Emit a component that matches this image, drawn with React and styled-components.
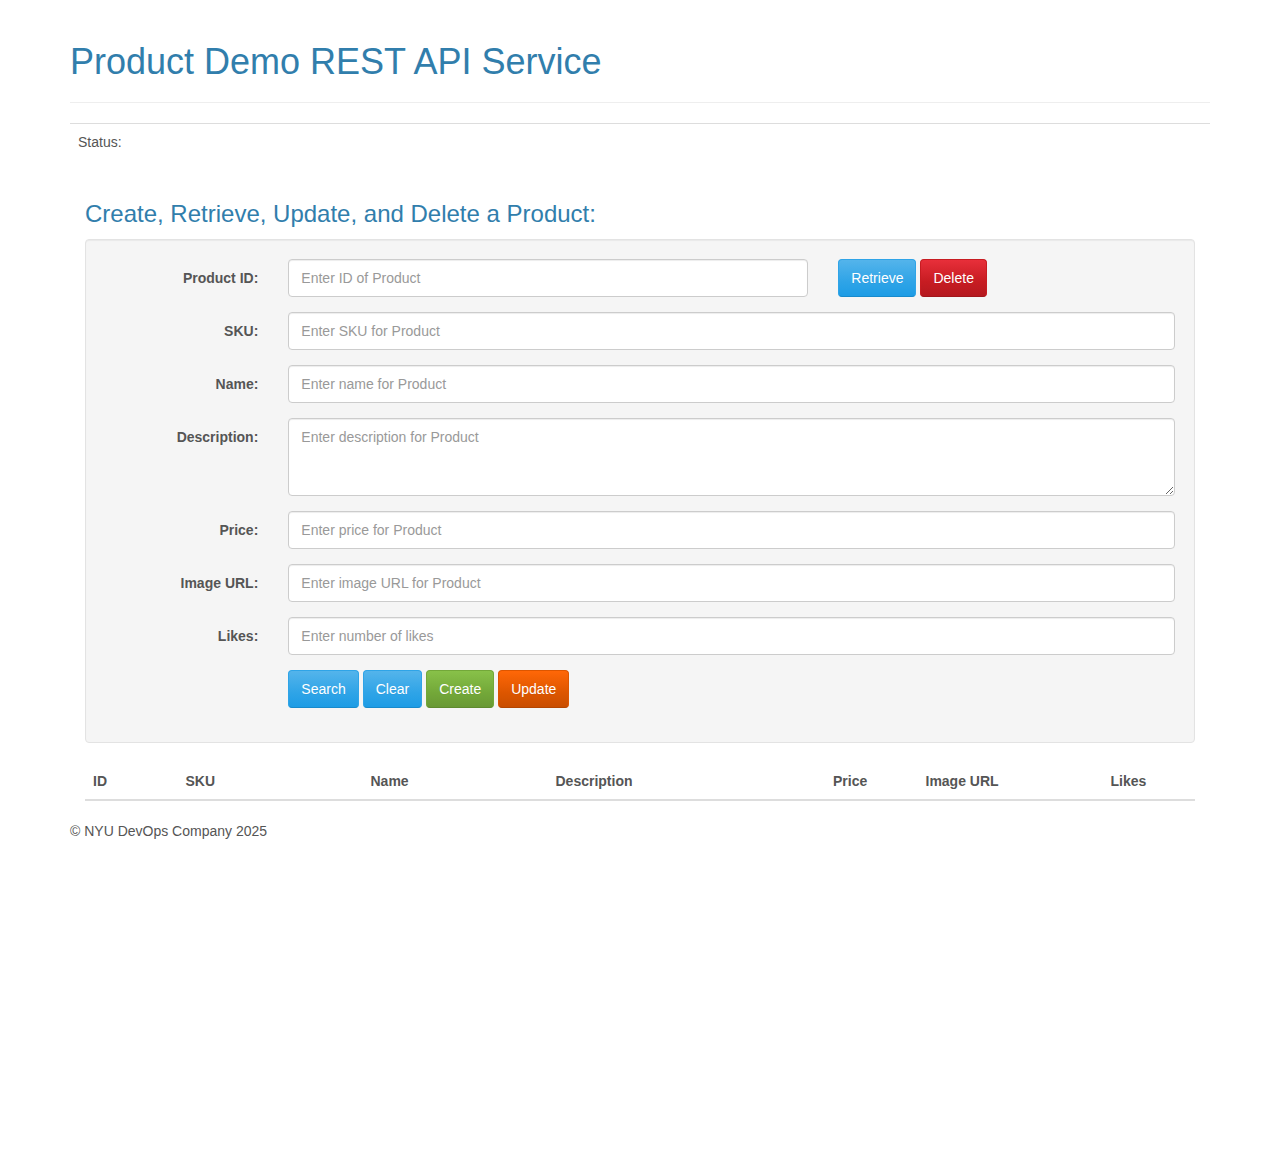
import React from "react";
import styled, { createGlobalStyle, css } from "styled-components";

const GlobalStyle = createGlobalStyle`
  * { box-sizing: border-box; }
  html, body { margin: 0; padding: 0; background: #fff; }
  body {
    font-family: "Liberation Sans", Arial, Helvetica, sans-serif;
    font-size: 14px;
    line-height: 20px;
    color: #555555;
  }
`;

const Container = styled.div`
  width: 1140px;
  margin: 0 auto;
`;

const PageHeader = styled.div`
  margin: 42px 0 20px;
  padding-bottom: 10px;
  border-bottom: 1px solid #eeeeee;
`;

const Title = styled.h1`
  margin: 0 0 10px;
  font-size: 36px;
  line-height: 39.6px;
  font-weight: 400;
  color: #317eac;
`;

const StatusRow = styled.div`
  display: flex;
  border-top: 1px solid #dddddd;
  padding: 8px;
  margin-bottom: 20px;
  line-height: 20px;
`;

const Section = styled.div`
  display: flow-root;
  padding: 0 15px;
`;

const SectionTitle = styled.h3`
  margin: 21px 0 12px;
  font-size: 24px;
  line-height: 26.4px;
  font-weight: 400;
  color: #317eac;
`;

const Well = styled.div`
  background: #f5f5f5;
  border: 1px solid #e3e3e3;
  border-radius: 4px;
  box-shadow: inset 0 1px 1px rgba(0, 0, 0, 0.05);
  padding: 19px;
  margin-bottom: 20px;
`;

const FormRow = styled.div`
  display: flex;
  margin: 0 -15px 15px;
`;

const Label = styled.label`
  width: 16.6667%;
  padding: 9px 15px 0;
  text-align: right;
  font-weight: 700;
  line-height: 20px;
`;

const Field = styled.div`
  width: ${(p) => p.$span}%;
  padding: 0 15px;
  margin-left: ${(p) => (p.$offset ? "16.6667%" : "0")};
`;

const controlStyles = css`
  display: block;
  width: 100%;
  padding: 8px 12px;
  font-family: inherit;
  font-size: 14px;
  line-height: 20px;
  color: #555555;
  background: #fff;
  border: 1px solid #cccccc;
  border-radius: 4px;
  box-shadow: inset 0 1px 1px rgba(0, 0, 0, 0.075);
  outline: none;
  &::placeholder { color: #999999; }
`;

const Input = styled.input`
  ${controlStyles}
  height: 38px;
`;

const TextArea = styled.textarea`
  ${controlStyles}
  height: 78px;
  resize: vertical;
`;

const ButtonGroup = styled.div`
  display: flex;
  gap: 4px;
`;

const variants = {
  primary: css`
    background-color: #2fa4e7;
    background-image: linear-gradient(#54b4eb, #2fa4e7 60%, #1d9ce5);
    border-color: #2fa4e7;
    border-bottom-color: #178acc;
  `,
  danger: css`
    background-color: #c71c22;
    background-image: linear-gradient(#e72f3a, #c71c22 60%, #b5191f);
    border-color: #c71c22;
    border-bottom-color: #a1161b;
  `,
  success: css`
    background-color: #73a839;
    background-image: linear-gradient(#88c149, #73a839 60%, #699934);
    border-color: #73a839;
    border-bottom-color: #5e8a2e;
  `,
  warning: css`
    background-color: #dd5600;
    background-image: linear-gradient(#ff6707, #dd5600 60%, #c94e00);
    border-color: #dd5600;
    border-bottom-color: #b44600;
  `,
};

const Button = styled.button`
  display: inline-block;
  padding: 8px 12px;
  font-family: inherit;
  font-size: 14px;
  line-height: 20px;
  color: #fff;
  border: 1px solid transparent;
  border-radius: 4px;
  text-shadow: 0 1px 0 rgba(0, 0, 0, 0.05);
  cursor: pointer;
  ${(p) => variants[p.$variant]}
`;

const Table = styled.div`
  display: grid;
  grid-template-columns: 1fr 2fr 2fr 3fr 1fr 2fr 1fr;
  border-bottom: 2px solid #dddddd;
  margin-bottom: 20px;
`;

const Th = styled.div`
  padding: 8px;
  font-weight: 700;
  line-height: 20px;
`;

const Footer = styled.p`
  margin: 0;
  line-height: 20px;
`;

const fields = [
  { label: "SKU:", placeholder: "Enter SKU for Product" },
  { label: "Name:", placeholder: "Enter name for Product" },
  { label: "Description:", placeholder: "Enter description for Product", area: true },
  { label: "Price:", placeholder: "Enter price for Product" },
  { label: "Image URL:", placeholder: "Enter image URL for Product" },
  { label: "Likes:", placeholder: "Enter number of likes" },
];

const columns = ["ID", "SKU", "Name", "Description", "Price", "Image URL", "Likes"];

export default function App() {
  return (
    <>
      <GlobalStyle />
      <Container>
        <PageHeader>
          <Title>Product Demo REST API Service</Title>
        </PageHeader>
        <StatusRow>
          <span>Status:</span>
          <span />
        </StatusRow>
        <Section>
          <SectionTitle>Create, Retrieve, Update, and Delete a Product:</SectionTitle>
          <Well>
            <FormRow>
              <Label>Product ID:</Label>
              <Field $span={50}>
                <Input placeholder="Enter ID of Product" />
              </Field>
              <Field $span={33.3333}>
                <ButtonGroup>
                  <Button $variant="primary">Retrieve</Button>
                  <Button $variant="danger">Delete</Button>
                </ButtonGroup>
              </Field>
            </FormRow>
            {fields.map((f) => (
              <FormRow key={f.label}>
                <Label>{f.label}</Label>
                <Field $span={83.3333}>
                  {f.area ? (
                    <TextArea rows={3} placeholder={f.placeholder} />
                  ) : (
                    <Input placeholder={f.placeholder} />
                  )}
                </Field>
              </FormRow>
            ))}
            <FormRow>
              <Field $span={83.3333} $offset>
                <ButtonGroup>
                  <Button $variant="primary">Search</Button>
                  <Button $variant="primary">Clear</Button>
                  <Button $variant="success">Create</Button>
                  <Button $variant="warning">Update</Button>
                </ButtonGroup>
              </Field>
            </FormRow>
          </Well>
          <Table>
            {columns.map((c) => (
              <Th key={c}>{c}</Th>
            ))}
          </Table>
        </Section>
        <Footer>© NYU DevOps Company 2025</Footer>
      </Container>
    </>
  );
}
